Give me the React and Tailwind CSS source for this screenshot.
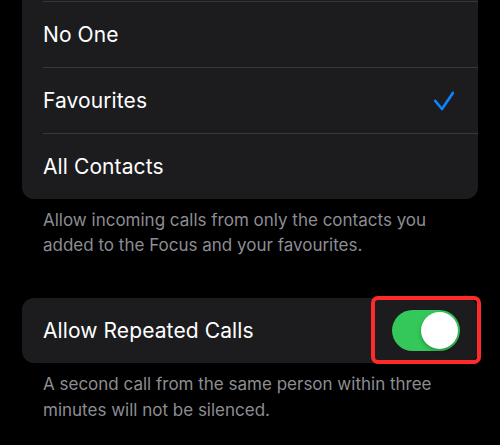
import React from "react";

const options = [
  { label: "No One", checked: false },
  { label: "Favourites", checked: true },
  { label: "All Contacts", checked: false },
];

const Check = () => (
  <svg width="20" height="20" viewBox="0 0 20 20" fill="none" stroke="#0a84ff" strokeWidth={2.6} strokeLinecap="round" strokeLinejoin="round">
    <path d="M1.2 9.8L8 18L19 1.8" />
  </svg>
);

const Toggle = () => (
  <div className="relative">
    <div className="w-[68px] h-[41px] rounded-full bg-[#34c759] flex items-center justify-end px-[2px]">
      <div className="w-[37px] h-[37px] rounded-full bg-white shadow-[0_2px_4px_rgba(0,0,0,0.25)]" />
    </div>
    <div className="absolute -left-[21px] -right-[21px] -top-[14px] -bottom-[13px] border-4 border-[#ff2b2b] rounded-[7px]" />
  </div>
);

const App = () => {
  return (
    <div className="w-[500px] h-[445px] bg-black overflow-hidden font-['Inter','Noto_Sans',sans-serif]">
      <div className="mx-[22px] pt-px bg-[#1c1c1e] rounded-b-[12px]">
        {options.map((o) => (
          <div key={o.label} className="pl-[21px]">
            <div className="h-[66px] border-t border-[#38383a] flex items-center justify-between pr-[24px]">
              <span className="text-white text-[21px] tracking-[0.1px]">{o.label}</span>
              {o.checked && <Check />}
            </div>
          </div>
        ))}
      </div>
      <p className="px-[43px] pt-[9px] text-[17px] leading-[25px] text-[#8d8d93]">
        Allow incoming calls from only the contacts you added to the Focus and your favourites.
      </p>
      <div className="mx-[22px] mt-[40px] h-[65px] bg-[#1c1c1e] rounded-[12px] pl-[21px] pr-[18px] flex items-center justify-between">
        <span className="text-white text-[21px] tracking-[0.1px]">Allow Repeated Calls</span>
        <Toggle />
      </div>
      <p className="px-[43px] pt-[8px] text-[17px] leading-[26px] text-[#8d8d93]">
        A second call from the same person within three minutes will not be silenced.
      </p>
    </div>
  );
};

export default App;
